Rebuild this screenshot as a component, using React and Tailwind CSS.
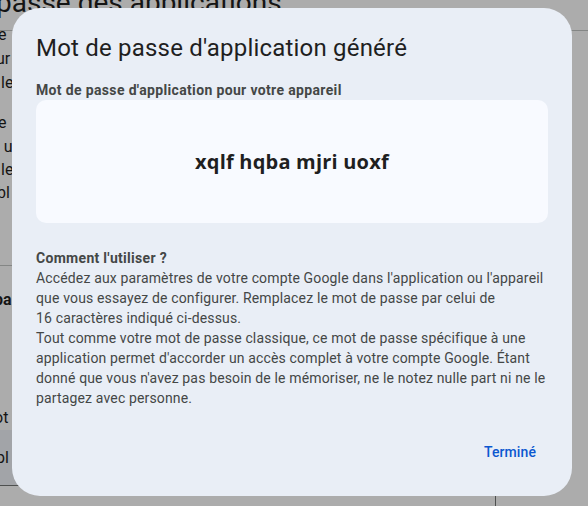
const bodyFont = { fontFamily: "Roboto, 'Noto Sans', Arial, sans-serif" };

function BackgroundPage() {
  return (
    <div className="flex h-[506px] w-[588px] flex-col bg-white text-[#1f1f1f]">
      <div className="-mt-[15px] ml-[-4px] text-[28px] leading-[36px] text-[#1f1f1f]">
        passe des applications
      </div>
      <div className="mt-[9px] border-t border-[#c4c7c5]" />
      <div className="-mt-[8px] flex flex-col text-[16px] leading-[24px] text-[#1f1f1f]">
        <span className="ml-[-2px]">e</span>
        <span className="ml-[-4px]">ur</span>
        <span className="ml-[1px]">le</span>
        <span className="mt-[16px] ml-[-2px]">e</span>
        <span className="ml-[-4px] leading-[23px]">i u</span>
        <span className="ml-[1px] leading-[23px]">le</span>
        <span className="ml-[-3px] leading-[23px]">bl</span>
      </div>
      <div className="mt-[61px] w-[300px] border-t border-[#c4c7c5]" />
      <div className="mt-[22px] ml-[-6px] text-[16px] font-bold leading-[24px]">pa</div>
      <div className="mt-[94px] ml-[-6px] text-[16px] leading-[24px]">ot</div>
      <div className="flex h-[55px] w-[300px] items-center bg-[#f0f4f9] text-[16px]">
        <span className="ml-[-4px]">pl</span>
      </div>
      <div className="w-[300px] border-t border-[#747775]" />
      <div className="ml-[495px] flex-1 border-l border-[#747775]" />
    </div>
  );
}

export default function App() {
  return (
    <div className="relative h-[506px] w-[588px] overflow-hidden" style={bodyFont}>
      <BackgroundPage />
      <div className="absolute inset-0 bg-black/[0.325]" />
      <div className="absolute left-[12px] top-[8px] flex h-[488px] w-[560px] flex-col rounded-[28px] bg-[#e9eef6] px-6 pt-6 pb-6">
        <h1 className="text-[24px] leading-[32px] tracking-[0.2px] text-[#1f1f1f]">
          Mot de passe d'application généré
        </h1>
        <div className="mt-4 text-[14px] font-bold leading-[20px] tracking-[0.35px] text-[#444746]">
          Mot de passe d'application pour votre appareil
        </div>
        <div className="flex h-[123px] items-center justify-center rounded-[10px] bg-[#f8faff]">
          <span className="font-['Open_Sans',sans-serif] text-[20px] font-bold tracking-[0.2px] text-[#1f1f1f]">
            xqlf hqba mjri uoxf
          </span>
        </div>
        <div className="mt-[25px] text-[14px] leading-[20px] tracking-[0.15px] text-[#444746]">
          <div className="font-bold tracking-[0.3px]">Comment l'utiliser ?</div>
          <p>
            Accédez aux paramètres de votre compte Google dans l'application ou l'appareil
            <br />
            que vous essayez de configurer. Remplacez le mot de passe par celui de
            <br />
            16 caractères indiqué ci-dessus.
          </p>
          <p>
            Tout comme votre mot de passe classique, ce mot de passe spécifique à une
            <br />
            application permet d'accorder un accès complet à votre compte Google. Étant
            <br />
            donné que vous n'avez pas besoin de le mémoriser, ne le notez nulle part ni ne le
            <br />
            partagez avec personne.
          </p>
        </div>
        <div className="mt-auto flex justify-end">
          <button
            type="button"
            className="h-10 rounded-full px-3 text-[14px] font-medium tracking-[0.1px] text-[#0b57d0]"
          >
            Terminé
          </button>
        </div>
      </div>
    </div>
  );
}
